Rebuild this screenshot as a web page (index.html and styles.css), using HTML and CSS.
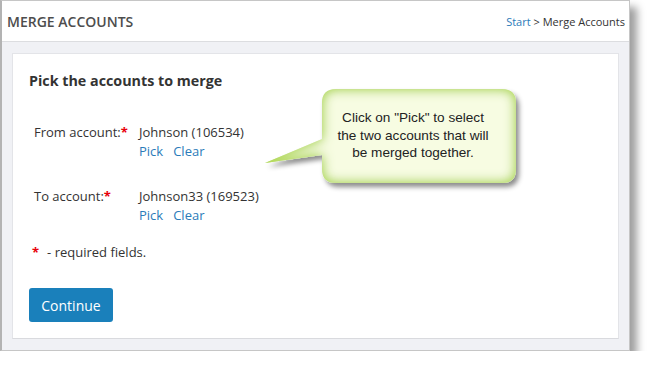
FILE: index.html
```html
<!DOCTYPE html>
<html lang="en">
<head>
    <meta charset="UTF-8" />
    <title>Merge Accounts</title>
    <link rel="stylesheet" href="styles.css">
</head>
<body>
    <div class="window">
        <div class="window-head">
            <span class="window-title">MERGE ACCOUNTS</span>
            <span class="crumbs"><a href="#">Start</a> &gt; Merge Accounts</span>
        </div>

        <div class="window-body">
            <div class="card">
                <h2>Pick the accounts to merge</h2>

                <div class="merge-form">
                    <div class="form-row">
                        <div class="label">From account:<span class="req">*</span></div>
                        <div class="value">
                            <div>Johnson (106534)</div>
                            <div class="links"><a href="#">Pick</a><a href="#">Clear</a></div>
                        </div>
                    </div>
                    <div class="form-row">
                        <div class="label">To account:<span class="req">*</span></div>
                        <div class="value">
                            <div>Johnson33 (169523)</div>
                            <div class="links"><a href="#">Pick</a><a href="#">Clear</a></div>
                        </div>
                    </div>
                </div>

                <p class="required-note"><span class="req">*</span>- required fields.</p>

                <button class="continue-btn">Continue</button>
            </div>
        </div>
    </div>

    <!-- callout bubble laid over the form -->
    <div class="callout">
        <svg class="callout-shape" width="290" height="125" viewBox="250 75 290 125">
            <defs>
                <filter id="bubble" x="-20%" y="-20%" width="140%" height="150%">
                    <feGaussianBlur in="SourceAlpha" stdDeviation="6" result="blur"/>
                    <feComposite in="SourceAlpha" in2="blur" operator="out" result="edge"/>
                    <feFlood flood-color="#b4da5a"/>
                    <feComposite in2="edge" operator="in" result="glow"/>
                    <feGaussianBlur in="SourceAlpha" stdDeviation="2.5" result="sblur"/>
                    <feOffset in="sblur" dx="3" dy="4" result="soff"/>
                    <feFlood flood-color="#000" flood-opacity="0.45"/>
                    <feComposite in2="soff" operator="in" result="shadow"/>
                    <feMerge>
                        <feMergeNode in="shadow"/>
                        <feMergeNode in="SourceGraphic"/>
                        <feMergeNode in="glow"/>
                        <feMergeNode in="glow"/>
                    </feMerge>
                </filter>
            </defs>
            <path filter="url(#bubble)" fill="#f7fce2"
                  d="M336,89 H502 Q516,89 516,103 V169 Q516,183 502,183 H336 Q322,183 322,169 V155 L265,163 L322,139 V103 Q322,89 336,89 Z"/>
        </svg>
        <div class="callout-text">Click on "Pick" to select<br>the two accounts that will<br>be merged together.</div>
    </div>
</body>
</html>
```

FILE: styles.css
```css
body {
    margin: 0;
    background: #fff;
    font-family: "Open Sans", "Noto Sans", sans-serif;
    color: #333;
}
a {
    color: #2b7bb9;
    text-decoration: none;
}
.window {
    width: 630px;
    box-sizing: border-box;
    border: 1px solid #c6c6c6;
    border-left: 2px solid #b3b3b3;
    background: #fff;
    box-shadow: 7px 7px 8px rgba(0,0,0,0.38);
}
.window-head {
    height: 40px;
    display: flex;
    justify-content: space-between;
    align-items: center;
    padding: 0 4px 0 5px;
    border-bottom: 1px solid #dcdde0;
}
.window-title {
    font-size: 14px;
    font-weight: 600;
    color: #4d4d4d;
}
.crumbs {
    font-size: 11px;
    color: #333;
}
.window-body {
    background: #f0f1f5;
    padding: 11px 10px 11px 10px;
}
.card {
    background: #fff;
    border: 1px solid #e3e4e8;
    border-bottom-color: #d9dade;
    padding: 17px 16px 16px;
}
h2 {
    margin: 0;
    font-size: 14.3px;
    line-height: 19px;
    font-weight: 700;
    color: #333;
}
.merge-form {
    margin-top: 33px;
    padding-left: 5px;
    font-size: 13px;
    line-height: 19px;
}
.form-row {
    display: grid;
    grid-template-columns: 105px 1fr;
}
.form-row + .form-row {
    margin-top: 26px;
}
.req {
    color: #e8000b;
    font-weight: 700;
}
.links a {
    margin-right: 10px;
}
.required-note {
    margin: 18px 0 0 3px;
    font-size: 13px;
    line-height: 19px;
}
.required-note .req {
    margin-right: 8px;
}
.continue-btn {
    margin-top: 26px;
    width: 84px;
    height: 34px;
    background: #1a80bb;
    color: #fff;
    border: none;
    border-radius: 3px;
    font-family: "Open Sans", "Noto Sans", sans-serif;
    font-size: 14px;
    cursor: pointer;
}
.callout {
    position: absolute;
    left: 250px;
    top: 75px;
    width: 290px;
    height: 125px;
}
.callout-shape {
    display: block;
}
.callout-text {
    position: absolute;
    left: 78px;
    top: 34px;
    width: 170px;
    font-family: "Liberation Sans", Arial, sans-serif;
    font-size: 13.6px;
    line-height: 17.5px;
    color: #222;
    text-align: center;
}
```
